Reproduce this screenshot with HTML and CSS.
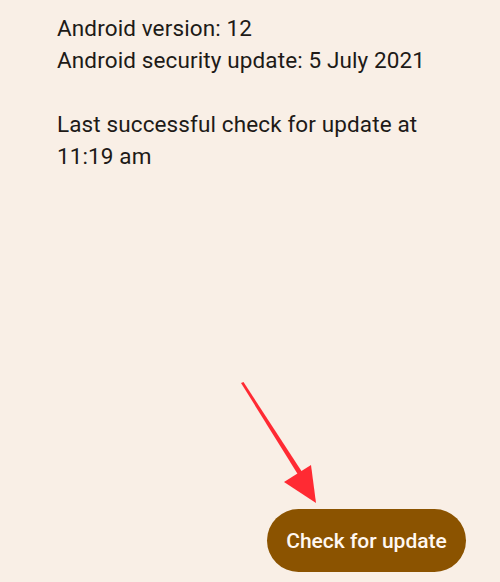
FILE: index.html
```html
<!DOCTYPE html>
<html>
<head>
<meta charset="utf-8">
<link rel="stylesheet" href="styles.css">
</head>
<body>
<div class="screen">
  <div class="info">
    <p class="para">Android version: 12<br>Android security update: 5 July 2021</p>
    <p class="para">Last successful check for update at<br>11:19 am</p>
  </div>
  <div class="actions">
    <button class="btn">Check for update</button>
  </div>
  <svg class="arrow" width="500" height="582" viewBox="0 0 500 582">
    <polygon points="241,383 243.5,382 306,478 302,481" fill="#ff2a33"/>
    <polygon points="316,503 284,482 311,465" fill="#ff2a33"/>
  </svg>
</div>
</body>
</html>
```
FILE: styles.css
```css
html, body {
  margin: 0;
  padding: 0;
  background: #f9efe6;
}
.screen {
  position: relative;
  width: 500px;
  height: 582px;
  display: flex;
  flex-direction: column;
  box-sizing: border-box;
  padding: 13px 34px 10px 57px;
  font-family: Roboto, "Noto Sans", sans-serif;
  color: #201a17;
}
.info {
  flex: 1;
}
.para {
  margin: 0 0 33px 0;
  font-size: 22.5px;
  line-height: 31.5px;
  letter-spacing: 0.12px;
}
.actions {
  display: flex;
  justify-content: flex-end;
}
.btn {
  height: 63px;
  width: 199px;
  border: none;
  border-radius: 32px;
  background: #8b5300;
  color: #fff8f2;
  font-family: Roboto, "Noto Sans", sans-serif;
  font-size: 21px;
  font-weight: 500;
  padding: 0;
}
.arrow {
  position: absolute;
  left: 0;
  top: 0;
  pointer-events: none;
}
```
